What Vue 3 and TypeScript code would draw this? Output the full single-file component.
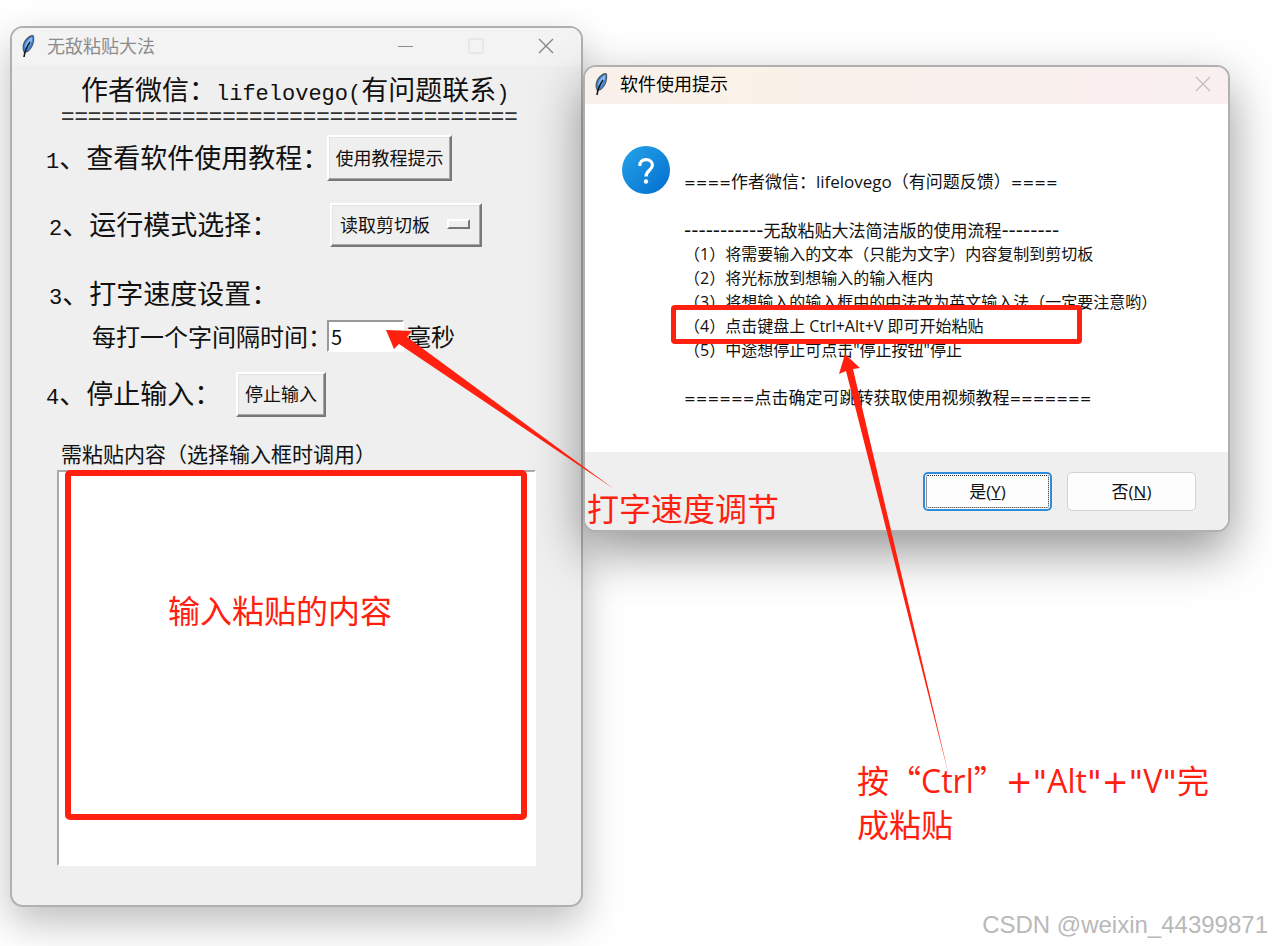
<script setup lang="ts">
import { ref } from 'vue'

const interval = ref('5')
const mode = ref('读取剪切板')
const content = ref('')
const separator = '='.repeat(34)
const steps: string[] = [
  '（1）将需要输入的文本（只能为文字）内容复制到剪切板',
  '（2）将光标放到想输入的输入框内',
  '（3）将想输入的输入框中的中法改为英文输入法（一定要注意哟）',
  '（4）点击键盘上 Ctrl+Alt+V 即可开始粘贴',
  '（5）中途想停止可点击"停止按钮"停止',
]
</script>

<template>
  <main class="desktop" lang="zh-CN">
    <section class="window tool">
      <header class="titlebar">
        <svg class="feather" viewBox="0 0 16 24" aria-hidden="true">
          <path d="M4 19C1 13 3 7 8 3C10 1 13 0 14 2C15 7 13 14 8 18Z" fill="#4b5868" />
          <path d="M4 17C3 11 5 7 9 4L13 2C14 7 12 13 8 17Z" fill="#3f83d0" />
          <path d="M5 13C6 8 8 5 12 3C13 7 10 11 7 15Z" fill="#85b8f0" />
          <path d="M10 8C8 11 5 15 4 23" fill="none" stroke="#15171b" stroke-width="1.6" />
        </svg>
        <h1 class="title">无敌粘贴大法</h1>
        <button class="control" type="button" aria-label="最小化">
          <svg viewBox="0 0 16 16"><path d="M0 8.5H15" stroke="#8b8b8b" /></svg>
        </button>
        <button class="control" type="button" aria-label="最大化" disabled>
          <svg viewBox="0 0 16 16"><rect x="1" y="1" width="14" height="14" rx="1" fill="none" stroke="#dcdcdc" /></svg>
        </button>
        <button class="control" type="button" aria-label="关闭">
          <svg viewBox="0 0 16 16"><path d="M1 1L15 15M15 1L1 15" stroke="#838383" stroke-width="1.3" /></svg>
        </button>
      </header>
      <div class="tool-body">
        <h2 class="author">作者微信：<span class="mono">lifelovego(</span>有问题联系<span class="mono">)</span></h2>
        <div class="separator">{{ separator }}</div>
        <div class="row tutorial">
          <span class="caption"><span class="mono">1</span>、查看软件使用教程：</span>
          <button class="raised" type="button">使用教程提示</button>
        </div>
        <div class="row mode">
          <label class="caption" for="mode"><span class="mono">2</span>、运行模式选择：</label>
          <span class="menu">
            <select id="mode" v-model="mode" class="raised">
              <option>读取剪切板</option>
              <option>输入框</option>
            </select>
            <i class="indicator"></i>
          </span>
        </div>
        <div class="row speed">
          <span class="caption"><span class="mono">3</span>、打字速度设置：</span>
        </div>
        <div class="row delay">
          <label class="caption" for="delay">每打一个字间隔时间：</label>
          <input id="delay" v-model="interval" type="text" />
          <span>毫秒</span>
        </div>
        <div class="row stop">
          <span class="caption"><span class="mono">4</span>、停止输入：</span>
          <button class="raised" type="button">停止输入</button>
        </div>
        <label class="paste-label" for="paste">需粘贴内容（选择输入框时调用）</label>
        <div class="paste">
          <textarea id="paste" v-model="content"></textarea>
          <div class="paste-mark note">输入粘贴的内容</div>
        </div>
      </div>
    </section>

    <section class="window dialog">
      <header class="titlebar">
        <svg class="feather" viewBox="0 0 16 24" aria-hidden="true">
          <path d="M4 19C1 13 3 7 8 3C10 1 13 0 14 2C15 7 13 14 8 18Z" fill="#4b5868" />
          <path d="M4 17C3 11 5 7 9 4L13 2C14 7 12 13 8 17Z" fill="#3f83d0" />
          <path d="M5 13C6 8 8 5 12 3C13 7 10 11 7 15Z" fill="#85b8f0" />
          <path d="M10 8C8 11 5 15 4 23" fill="none" stroke="#15171b" stroke-width="1.6" />
        </svg>
        <h2 class="title">软件使用提示</h2>
        <button class="control" type="button" aria-label="关闭">
          <svg viewBox="0 0 16 16"><path d="M1 1L15 15M15 1L1 15" stroke="#c3bcbb" stroke-width="1.2" /></svg>
        </button>
      </header>
      <div class="message">
        <svg class="question" viewBox="0 0 48 48" aria-hidden="true">
          <defs>
            <linearGradient id="blue" x1="0" y1="0" x2="1" y2="1">
              <stop offset="0.1" stop-color="#229fe6" />
              <stop offset="0.9" stop-color="#0573d2" />
            </linearGradient>
          </defs>
          <circle cx="24" cy="24" r="24" fill="url(#blue)" />
          <path d="M17.8 20C17.8 15.8 20.3 13.6 24 13.6C27.8 13.6 30.4 15.8 30.4 19C30.4 24.2 24 24.4 24 30.5" fill="none" stroke="#fff" stroke-width="3.2" />
          <circle cx="24" cy="35.5" r="2.2" fill="#fff" />
        </svg>
        <div class="text">
          <p><span class="equals">====</span>作者微信：lifelovego（有问题反馈）<span class="equals">====</span></p>
          <p class="intro"><span class="dashes">-----------</span>无敌粘贴大法简洁版的使用流程<span class="dashes">--------</span></p>
          <ul>
            <li v-for="(step, index) in steps" :key="step" :class="{ marked: index === 3 }">{{ step }}</li>
          </ul>
          <p class="outro"><span class="equals">======</span>点击确定可跳转获取使用视频教程<span class="equals">=======</span></p>
        </div>
      </div>
      <footer class="actions">
        <button class="choice primary" type="button">是(<u>Y</u>)</button>
        <button class="choice" type="button">否(<u>N</u>)</button>
      </footer>
    </section>

    <svg class="arrows" width="1272" height="946" viewBox="0 0 1272 946" aria-hidden="true">
      <g fill="#ff2010">
        <path d="M386 330L412 331L407 337L614 489L399 344L394 349Z" />
        <path d="M845 354L860 368L853 369L949 776L846 371L839 374Z" />
      </g>
    </svg>
    <div class="note speed-note">打字速度调节</div>
    <div class="note keys-note">
      <div>按<span class="wide">“</span>Ctrl<span class="wide">”</span><span class="sign">+"</span>Alt<span class="sign">"+"</span>V<span class="sign">"</span>完</div>
      <div>成粘贴</div>
    </div>
    <div class="watermark">CSDN @weixin_44399871</div>
  </main>
</template>

<style>
body {
  margin: 0;
  background: #fff;
}
</style>

<style scoped>
*,
*::after {
  box-sizing: border-box;
}

.desktop {
  position: relative;
  display: grid;
  grid-template-columns: 573fr 647fr;
  align-items: start;
  min-height: 100vh;
  padding: 26px 42px 39px 10px;
  overflow: hidden;
  background: #fff;
  color: #111;
  font-family: "Open Sans", "Noto Sans CJK SC", sans-serif;
}

h1,
h2,
p,
ul {
  margin: 0;
  padding: 0;
  font-weight: 400;
  list-style: none;
}

button,
select,
input,
textarea {
  margin: 0;
  color: #111;
  font-family: inherit;
}

.window {
  border: 2px solid #b0b0b0;
  border-radius: 13px;
  white-space: nowrap;
}

.titlebar {
  display: flex;
  align-items: center;
  height: 38px;
  padding: 0 0 3px 8px;
  border-radius: 11px 11px 0 0;
}

.feather {
  width: 16px;
  height: 24px;
  margin-right: 11px;
}

.title {
  flex: 1;
  font-size: 18px;
  line-height: 24px;
}

.control {
  display: flex;
  align-items: center;
  justify-content: center;
  width: 70px;
  height: 34px;
  padding: 0;
  border: 0;
  background: transparent;
}

.control svg {
  width: 16px;
  height: 16px;
}

.tool {
  background: #efefef;
  box-shadow: 0 16px 40px rgba(0, 0, 0, 0.26);
}

.tool .titlebar {
  background: #f3f3f3;
}

.tool .title {
  color: #8c8c8c;
}

.tool-body {
  padding: 10px 45px 39px;
  font-family: "Noto Sans CJK SC", sans-serif;
  font-size: 27px;
  line-height: 28px;
}

.mono {
  font-family: "Liberation Mono", monospace;
  font-size: 22px;
  line-height: 1;
}

.author {
  height: 26px;
  margin-left: 24px;
  font-size: 27px;
  line-height: 26px;
}

.separator {
  margin-left: 4px;
  color: #333;
  font-family: "Liberation Sans", sans-serif;
  font-size: 23px;
  line-height: 28px;
}

.row {
  display: flex;
  align-items: center;
}

.caption {
  flex: none;
  width: 281px;
}

.raised {
  border: 2px solid;
  border-color: #fff #787878 #787878 #fff;
  border-radius: 0;
  outline: 0;
  background: #efefef;
  box-shadow: inset -1px -1px #a8a8a8, inset 1px 1px #e3e3e3;
  font-size: 18px;
  line-height: 24px;
}

.tutorial {
  margin: 5px 0 0 -11px;
}

.tutorial .raised {
  width: 125px;
  height: 46px;
  padding: 0 0 3px;
}

.mode {
  margin: 22px 0 0 -8px;
}

.menu {
  position: relative;
  width: 152px;
  height: 44px;
}

.menu .raised {
  display: block;
  width: 100%;
  height: 100%;
  padding: 0 8px 3px;
  appearance: none;
}

.indicator {
  position: absolute;
  top: 16px;
  right: 12px;
  width: 23px;
  height: 10px;
  border: 2px solid;
  border-color: #fff #777 #777 #fff;
  pointer-events: none;
}

.speed {
  height: 30px;
  margin: 32px 0 0 -8px;
}

.delay {
  margin: 11px 0 0 35px;
  font-size: 24px;
}

.delay .caption {
  width: 235px;
}

.delay input {
  width: 77px;
  height: 32px;
  margin-right: 3px;
  padding: 0 2px;
  border: 2px solid;
  border-color: #999 #fff #fff #999;
  border-radius: 0;
  outline: 0;
  background: #fff;
  font-size: 20px;
}

.stop {
  margin: 20px 0 0 -11px;
}

.stop .caption {
  width: 190px;
}

.stop .raised {
  width: 90px;
  height: 45px;
  padding: 0 0 3px;
}

.paste-label {
  display: block;
  margin: 24px 0 5px 4px;
  font-size: 21px;
  line-height: 24px;
}

.paste {
  position: relative;
}

.paste textarea {
  display: block;
  width: 100%;
  height: 396px;
  border: 2px solid;
  border-color: #aaa #fff #fff #aaa;
  border-radius: 0;
  outline: 0;
  background: #fff;
  resize: none;
  font-size: 20px;
}

.paste-mark {
  top: 0;
  right: 9px;
  left: 8px;
  height: 350px;
  padding: 113px 0 0 97px;
  border: 6px solid #ff2010;
  border-radius: 5px;
}

.dialog {
  margin-top: 39px;
  background: #fff;
  box-shadow: 0 20px 50px rgba(0, 0, 0, 0.42);
}

.dialog .titlebar {
  height: 37px;
  background: linear-gradient(90deg, #f9f0eb, #faf1e8 25%, #f9efed 60%, #faefef);
}

.dialog .title {
  color: #000;
}

.dialog .control {
  width: 50px;
}

.message {
  display: flex;
  gap: 14px;
  padding: 42px 37px;
  font-size: 17px;
  line-height: 24px;
}

.question {
  flex: none;
  width: 48px;
  height: 48px;
}

.text {
  padding-top: 24px;
}

.text p,
.text li {
  height: 24px;
}

.text li {
  font-size: 16px;
}

.intro,
.outro {
  margin-top: 24px;
}

.equals {
  font-family: "DejaVu Sans", sans-serif;
  font-size: 14px;
}

.dashes {
  font-family: "DejaVu Sans", sans-serif;
  font-size: 20px;
}

.marked {
  position: relative;
}

.marked::after {
  position: absolute;
  top: -9px;
  bottom: -6px;
  left: -13px;
  width: 411px;
  border: 5px solid #ff2010;
  border-radius: 4px;
  content: "";
}

.actions {
  display: flex;
  justify-content: flex-end;
  gap: 15px;
  padding: 20px 32px 19px;
  border-radius: 0 0 11px 11px;
  background: #efefef;
}

.choice {
  width: 129px;
  height: 39px;
  padding: 0 0 3px;
  border: 1px solid #d2d2d2;
  border-radius: 5px;
  background: #fdfdfd;
  font-size: 17px;
}

.primary {
  border: 2px solid #2f8cd8;
  outline: 1px dotted #222;
  outline-offset: -4px;
}

.arrows {
  position: absolute;
  top: 0;
  left: 0;
  pointer-events: none;
}

.note {
  position: absolute;
  color: #ff2010;
  font-family: "Open Sans", "Noto Sans CJK SC", sans-serif;
  font-size: 32px;
  line-height: 44px;
  white-space: nowrap;
  pointer-events: none;
}

.wide {
  font-family: "Noto Sans CJK SC", sans-serif;
  line-height: 1;
}

.sign {
  font-family: "DejaVu Sans", sans-serif;
  line-height: 1;
}

.speed-note {
  top: 487px;
  left: 587px;
}

.keys-note {
  top: 759px;
  left: 857px;
}

.watermark {
  position: absolute;
  right: 4px;
  bottom: 7px;
  color: #b9b9b9;
  font-family: "Liberation Sans", sans-serif;
  font-size: 24px;
  line-height: 28px;
}
</style>
